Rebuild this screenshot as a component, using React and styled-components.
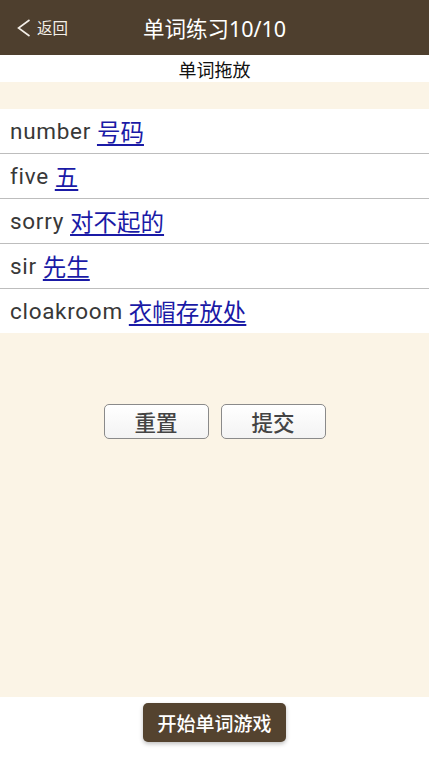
import styled, { createGlobalStyle } from "styled-components";

const GlobalStyle = createGlobalStyle`
    html, body {
        margin: 0;
        padding: 0;
        background: #fff;
    }
    body {
        font-family: "Noto Sans", "Noto Sans CJK SC", sans-serif;
    }
`;

const Page = styled.div`
    width: 429px;
    height: 768px;
    display: flex;
    flex-direction: column;
    background: #fff;
`;

const Header = styled.header`
    height: 55px;
    flex-shrink: 0;
    background: #4e3f2e;
    display: grid;
    grid-template-columns: 1fr auto 1fr;
    align-items: center;
`;

const BackButton = styled.div`
    display: flex;
    align-items: center;
    gap: 6px;
    padding-left: 17px;
    color: #f4efe8;
    font-size: 15.5px;
`;

const Title = styled.h1`
    margin: 0;
    color: #fff;
    font-size: 21.5px;
    font-weight: 400;
`;

const SubTitle = styled.div`
    height: 27px;
    display: flex;
    align-items: center;
    justify-content: center;
    font-size: 18px;
    color: #111;
`;

const Band = styled.div`
    height: 27px;
    background: #fbf4e6;
`;

const List = styled.ul`
    list-style: none;
    margin: 0;
    padding: 0;
    background: #fff;
`;

const Row = styled.li`
    height: 44px;
    display: flex;
    align-items: center;
    padding-left: 10px;
    font-family: Roboto, "Noto Sans CJK SC", sans-serif;
    font-size: 22.5px;
    letter-spacing: 0.7px;
    color: #383838;
    border-bottom: ${(p) => (p.$last ? "none" : "1px solid #bdbdbd")};
`;

const Meaning = styled.a`
    margin-left: 6px;
    font-family: "Noto Sans CJK SC", sans-serif;
    font-size: 23.5px;
    letter-spacing: 0;
    color: #1a1aa6;
    text-decoration: underline;
    text-underline-offset: 3px;
`;

const Body = styled.div`
    flex: 1;
    background: #fbf4e6;
    display: flex;
    justify-content: center;
    align-items: flex-start;
    gap: 12px;
    padding-top: 71px;
`;

const ActionButton = styled.button`
    width: 105px;
    height: 35px;
    border: 1px solid #8a8a8a;
    border-radius: 5px;
    background: linear-gradient(#ffffff, #f3f3f3);
    font-family: inherit;
    font-size: 21.5px;
    font-weight: 500;
    color: #444;
    cursor: pointer;
`;

const Footer = styled.div`
    height: 71px;
    flex-shrink: 0;
    display: flex;
    justify-content: center;
    align-items: flex-start;
    padding-top: 6px;
    box-sizing: border-box;
`;

const StartButton = styled.button`
    width: 143px;
    height: 39px;
    border: none;
    border-radius: 5px;
    background: #54432f;
    color: #fff;
    font-family: inherit;
    font-size: 19px;
    font-weight: 500;
    box-shadow: 0 2px 4px rgba(0, 0, 0, 0.25);
    cursor: pointer;
`;

const words = [
    { en: "number", zh: "号码" },
    { en: "five", zh: "五" },
    { en: "sorry", zh: "对不起的" },
    { en: "sir", zh: "先生" },
    { en: "cloakroom", zh: "衣帽存放处" },
];

export default function App() {
    return (
        <Page>
            <GlobalStyle />
            <Header>
                <BackButton>
                    <svg width="14" height="18" viewBox="0 0 14 18">
                        <polyline
                            points="12.5,1 1.5,9 12.5,17"
                            fill="none"
                            stroke="#f4efe8"
                            strokeWidth="1.6"
                        />
                    </svg>
                    返回
                </BackButton>
                <Title>单词练习10/10</Title>
                <div />
            </Header>
            <SubTitle>单词拖放</SubTitle>
            <Band />
            <List>
                {words.map((w, i) => (
                    <Row key={w.en} $last={i === words.length - 1}>
                        {w.en}
                        <Meaning>{w.zh}</Meaning>
                    </Row>
                ))}
            </List>
            <Body>
                <ActionButton>重置</ActionButton>
                <ActionButton>提交</ActionButton>
            </Body>
            <Footer>
                <StartButton>开始单词游戏</StartButton>
            </Footer>
        </Page>
    );
}
